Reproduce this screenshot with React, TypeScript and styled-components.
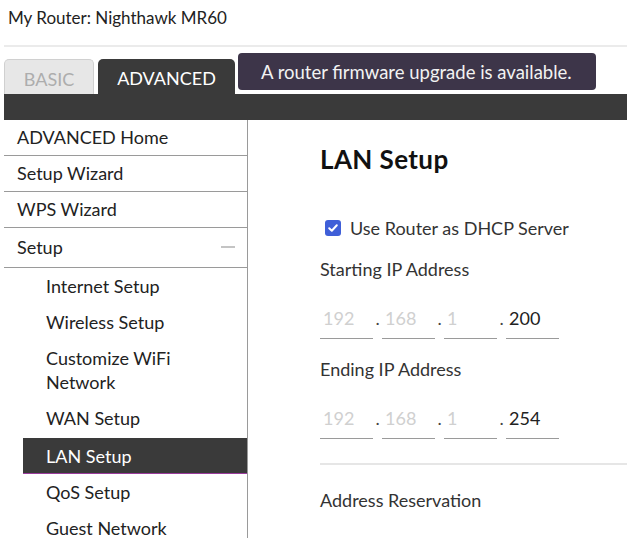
import styled, { createGlobalStyle } from "styled-components";
import React from "react";

const GlobalStyle = createGlobalStyle`
  body {
    margin: 0;
    background: #fff;
    font-family: Lato, "Open Sans", "Liberation Sans", sans-serif;
    color: #222;
  }
`;

const menu = ["ADVANCED Home", "Setup Wizard", "WPS Wizard"];
const subMenu = [
  "Internet Setup",
  "Wireless Setup",
  "Customize WiFi|Network",
  "WAN Setup",
  "LAN Setup",
  "QoS Setup",
  "Guest Network",
];

const IpRow = ({ value }: { value: string }) => (
  <Ip>
    <Field>192</Field>
    <Dot>.</Dot>
    <Field>168</Field>
    <Dot>.</Dot>
    <Field>1</Field>
    <Dot>.</Dot>
    <Field filled>{value}</Field>
  </Ip>
);

const App = () => {
  return (
    <Page>
      <GlobalStyle />
      <Title>My Router: Nighthawk MR60</Title>
      <Tabs>
        <Tab>BASIC</Tab>
        <Tab active>ADVANCED</Tab>
        <Notice>A router firmware upgrade is available.</Notice>
      </Tabs>
      <Bar />
      <Body>
        <Sidebar>
          {menu.map((m) => (
            <Item key={m}>{m}</Item>
          ))}
          <Item tall>
            Setup
            <Minus />
          </Item>
          {subMenu.map((s) => (
            <SubItem key={s} active={s === "LAN Setup"}>
              {s.split("|").map((part, i) => (
                <React.Fragment key={i}>
                  {i > 0 && <br />}
                  {part}
                </React.Fragment>
              ))}
            </SubItem>
          ))}
        </Sidebar>
        <Content>
          <Heading>LAN Setup</Heading>
          <CheckRow>
            <Box>
              <svg width="12" height="12" viewBox="0 0 12 12">
                <path d="M2.2 6.2 L4.8 8.7 L9.8 3.3" fill="none" stroke="#fff" strokeWidth="2" strokeLinecap="round" strokeLinejoin="round" />
              </svg>
            </Box>
            Use Router as DHCP Server
          </CheckRow>
          <Label>Starting IP Address</Label>
          <IpRow value="200" />
          <Label>Ending IP Address</Label>
          <IpRow value="254" />
          <Divider />
          <Label>Address Reservation</Label>
        </Content>
      </Body>
    </Page>
  );
};

export default App;

const Page = styled.div`
  margin-left: 4px;
  height: 538px;
  overflow: hidden;
`;

const Title = styled.div`
  height: 39px;
  padding: 6px 0 0 4px;
  font-size: 17px;
  line-height: 24px;
  color: #222;
  border-bottom: 2px solid #ebebeb;
`;

const Tabs = styled.div`
  display: flex;
  align-items: flex-end;
  height: 47px;
`;

const Tab = styled.div<{ active?: boolean }>`
  height: 35px;
  box-sizing: border-box;
  width: ${(p) => (p.active ? "137px" : "90px")};
  margin-right: 4px;
  display: flex;
  align-items: center;
  justify-content: center;
  padding-top: 3px;
  font-size: 18px;
  border-radius: 5px 5px 0 0;
  background: ${(p) => (p.active ? "#3a3a3a" : "#e7e7e7")};
  color: ${(p) => (p.active ? "#fff" : "#adadad")};
  border: ${(p) => (p.active ? "none" : "1px solid #d0d0d0")};
  border-bottom: none;
`;

const Notice = styled.div`
  align-self: flex-start;
  margin: 6px 0 0 -1px;
  width: 358px;
  height: 37px;
  box-sizing: border-box;
  border-radius: 4px;
  background: #3d3549;
  color: #f2f2f2;
  font-size: 18.5px;
  white-space: nowrap;
  display: flex;
  align-items: center;
  padding-left: 23px;
`;

const Bar = styled.div`
  height: 26px;
  background: #3a3a3a;
`;

const Body = styled.div`
  display: flex;
`;

const Sidebar = styled.div`
  width: 243px;
  flex-shrink: 0;
  border-right: 1px solid #9a9a9a;
  min-height: 430px;
`;

const Item = styled.div<{ tall?: boolean }>`
  height: ${(p) => (p.tall ? "39px" : "35px")};
  border-bottom: 1px solid #9a9a9a;
  display: flex;
  align-items: center;
  justify-content: space-between;
  padding: 0 12px 2px 13px;
  box-sizing: border-box;
  height: ${(p) => (p.tall ? "40px" : "36px")};
  font-size: 18px;
  color: #222;
`;

const Minus = styled.span`
  width: 14px;
  height: 2px;
  background: #c4c4c4;
`;

const SubItem = styled.div<{ active?: boolean }>`
  margin-left: 19px;
  padding: 6px 8px 6px 23px;
  font-size: 18px;
  line-height: 24px;
  color: ${(p) => (p.active ? "#fff" : "#222")};
  background: ${(p) => (p.active ? "#3a3a3a" : "transparent")};
  box-shadow: ${(p) => (p.active ? "inset 0 -1px 0 #9a3c9c" : "none")};
  margin-top: ${(p) => (p.active ? "2px" : "0")};
`;

const Content = styled.div`
  flex: 1;
  padding: 24px 0 0 72px;
  display: flex;
  flex-direction: column;
`;

const Heading = styled.div`
  font-size: 26px;
  font-weight: 700;
  letter-spacing: 0.4px;
  line-height: 30px;
  color: #111;
`;

const CheckRow = styled.div`
  margin-top: 42px;
  display: flex;
  align-items: center;
  gap: 9px;
  padding-left: 5px;
  font-size: 18px;
  line-height: 24px;
  color: #333;
`;

const Box = styled.span`
  width: 16px;
  height: 16px;
  border-radius: 3px;
  background: #3f5fd8;
  display: flex;
  align-items: center;
  justify-content: center;
`;

const Label = styled.div`
  margin-top: 17px;
  font-size: 18px;
  line-height: 24px;
  color: #333;
`;

const Ip = styled.div`
  margin-top: 18px;
  display: flex;
  & + ${Label} {
    margin-top: 18px;
  }
`;

const Field = styled.div<{ filled?: boolean }>`
  width: 50px;
  height: 32px;
  padding: 7px 0 0 3px;
  border-bottom: 1px solid #9a9a9a;
  font-size: 18px;
  line-height: 24px;
  color: ${(p) => (p.filled ? "#222" : "#d0d0d0")};
`;

const Dot = styled.div`
  width: 9px;
  padding-top: 7px;
  font-size: 18px;
  line-height: 24px;
  text-align: center;
  color: #444;
`;

const Divider = styled.div`
  margin-top: 24px;
  height: 2px;
  background: #e6e6e6;
  & + ${Label} {
    margin-top: 23px;
  }
`;
